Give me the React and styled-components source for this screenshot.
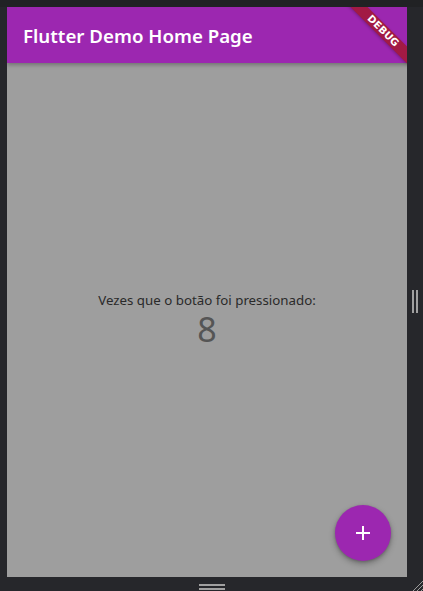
import React from 'react'
import styled, { createGlobalStyle } from 'styled-components'

const Global = createGlobalStyle`
  html, body { margin: 0; padding: 0; background: #26272b; }
`

const Frame = styled.div`
  width: 423px;
  height: 591px;
  display: flex;
  flex-direction: column;
  background: #26272b;
  overflow: hidden;
  font-family: "Noto Sans", "Open Sans", sans-serif;
`

const TopStrip = styled.div`
  height: 7px;
  background: #212224;
`

const Middle = styled.div`
  display: flex;
  height: 570px;
`

const LeftStrip = styled.div`
  width: 7px;
  background: #26272b;
`

const Phone = styled.div`
  position: relative;
  width: 400px;
  display: flex;
  flex-direction: column;
  background: #9e9e9e;
  overflow: hidden;
`

const AppBar = styled.div`
  height: 56px;
  display: flex;
  align-items: center;
  padding-left: 16px;
  background: #9c27b0;
  color: #fff;
  font-size: 18.7px;
  font-weight: 600;
  box-shadow: 0 2px 4px rgba(0, 0, 0, 0.28);
  position: relative;
  z-index: 1;
`

const Body = styled.div`
  flex: 1;
  display: flex;
  flex-direction: column;
  align-items: center;
  justify-content: center;
`

const Label = styled.div`
  font-size: 13.3px;
  line-height: 18px;
  color: #2a2a2a;
`

const Count = styled.div`
  font-size: 34px;
  line-height: 40px;
  color: #555;
  font-weight: 400;
`

const Fab = styled.button`
  position: absolute;
  right: 16px;
  bottom: 16px;
  width: 56px;
  height: 56px;
  border-radius: 50%;
  border: none;
  background: #9c27b0;
  display: flex;
  align-items: center;
  justify-content: center;
  box-shadow: 0 3px 6px rgba(0, 0, 0, 0.28), 0 1px 3px rgba(0, 0, 0, 0.2);
  padding: 0;
`

const BannerClip = styled.div`
  position: absolute;
  top: 0;
  right: 0;
  width: 80px;
  height: 80px;
  overflow: hidden;
  z-index: 2;
  pointer-events: none;
`

const Ribbon = styled.div`
  position: absolute;
  top: 18px;
  right: -26px;
  width: 100px;
  height: 12px;
  transform: rotate(45deg);
  background: #a21a44;
  box-shadow: 0 1px 3px rgba(0, 0, 0, 0.25);
  color: #fff;
  font-family: "DejaVu Sans", sans-serif;
  font-size: 10px;
  font-weight: 900;
  line-height: 12px;
  text-align: center;
  letter-spacing: 0.2px;
`

const RightStrip = styled.div`
  width: 16px;
  display: flex;
  align-items: center;
  justify-content: center;
  background: #26272b;
`

const VGrip = styled.div`
  width: 6px;
  height: 23px;
  margin-top: 18px;
  border-left: 2px solid #a0a0a0;
  border-right: 2px solid #a0a0a0;
  box-sizing: border-box;
`

const BottomStrip = styled.div`
  height: 14px;
  position: relative;
  display: flex;
  justify-content: center;
  background: #26272b;
`

const HGrip = styled.div`
  width: 26px;
  height: 6px;
  margin-top: 7px;
  border-top: 2px solid #a0a0a0;
  border-bottom: 2px solid #a0a0a0;
  box-sizing: border-box;
`

const Corner = styled.svg`
  position: absolute;
  right: 0;
  bottom: 0;
`

export default function App() {
  return (
    <>
      <Global />
      <Frame>
        <TopStrip />
        <Middle>
          <LeftStrip />
          <Phone>
            <AppBar>Flutter Demo Home Page</AppBar>
            <Body>
              <Label>Vezes que o botão foi pressionado:</Label>
              <Count>8</Count>
            </Body>
            <Fab>
              <svg width="24" height="24" viewBox="0 0 24 24">
                <path d="M19 13h-6v6h-2v-6H5v-2h6V5h2v6h6v2z" fill="#fff" />
              </svg>
            </Fab>
            <BannerClip>
              <Ribbon>DEBUG</Ribbon>
            </BannerClip>
          </Phone>
          <RightStrip>
            <VGrip />
          </RightStrip>
        </Middle>
        <BottomStrip>
          <HGrip />
          <Corner width="12" height="12" viewBox="0 0 12 12">
            <line x1="2" y1="12" x2="12" y2="2" stroke="#9a9a9a" strokeWidth="1" />
            <line x1="6" y1="12" x2="12" y2="6" stroke="#9a9a9a" strokeWidth="1" />
            <line x1="10" y1="12" x2="12" y2="10" stroke="#9a9a9a" strokeWidth="1" />
          </Corner>
        </BottomStrip>
      </Frame>
    </>
  )
}
